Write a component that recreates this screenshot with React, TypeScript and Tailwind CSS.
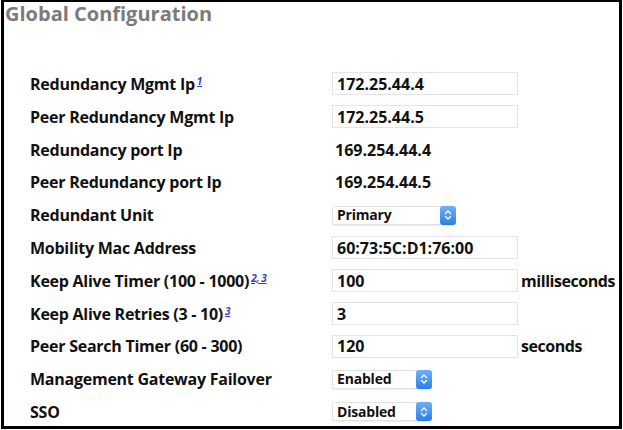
import React from 'react';

type Row = {
  label: string;
  sup?: string;
  kind: 'input' | 'text' | 'select';
  value: string;
  unit?: string;
  selectWidth?: string;
};

const ROWS: Row[] = [
  { label: 'Redundancy Mgmt Ip', sup: '1', kind: 'input', value: '172.25.44.4' },
  { label: 'Peer Redundancy Mgmt Ip', kind: 'input', value: '172.25.44.5' },
  { label: 'Redundancy port Ip', kind: 'text', value: '169.254.44.4' },
  { label: 'Peer Redundancy port Ip', kind: 'text', value: '169.254.44.5' },
  { label: 'Redundant Unit', kind: 'select', value: 'Primary', selectWidth: 'w-[124px]' },
  { label: 'Mobility Mac Address', kind: 'input', value: '60:73:5C:D1:76:00' },
  { label: 'Keep Alive Timer (100 - 1000)', sup: '2, 3', kind: 'input', value: '100', unit: 'milliseconds' },
  { label: 'Keep Alive Retries (3 - 10)', sup: '3', kind: 'input', value: '3' },
  { label: 'Peer Search Timer (60 - 300)', kind: 'input', value: '120', unit: 'seconds' },
  { label: 'Management Gateway Failover', kind: 'select', value: 'Enabled', selectWidth: 'w-[100px]' },
  { label: 'SSO', kind: 'select', value: 'Disabled', selectWidth: 'w-[100px]' },
];

function SelectBox({ value, width }: { value: string; width?: string }) {
  return (
    <div className={`flex items-center justify-between h-[19px] ${width} bg-white border border-[#e2e2e2] rounded-[3px] shadow-[0_1px_1px_rgba(0,0,0,0.08)]`}>
      <span className="pl-[4px] text-[14px] leading-none font-bold text-[#111] tracking-[-0.2px]">{value}</span>
      <span className="flex items-center justify-center w-[16px] h-[19px] -mr-px rounded-[3px] bg-gradient-to-b from-[#6fb0f7] to-[#2a7fe8]">
        <svg width="8" height="12" viewBox="0 0 8 12" fill="none" stroke="white" strokeWidth="1.4" strokeLinecap="round" strokeLinejoin="round">
          <path d="M1.5 4.5 L4 2 L6.5 4.5" />
          <path d="M1.5 7.5 L4 10 L6.5 7.5" />
        </svg>
      </span>
    </div>
  );
}

export default function App() {
  return (
    <div className="w-[623px] h-[430px] bg-white pl-px font-['Open_Sans',sans-serif]">
      <div className="w-[621px] h-[429px] border-[3px] border-t-[2px] border-black">
        <h2 className="pl-[1px] pt-[0px] h-[65.6px] text-[20px] leading-[24px] font-bold text-[#7b7b7b]">
          Global Configuration
        </h2>
        <div className="pl-[26px]">
          {ROWS.map((r) => (
            <div key={r.label} className="flex items-center h-[32.8px]">
              <div className="w-[302px] text-[16px] font-bold text-[#111] tracking-[-0.25px] whitespace-nowrap">
                {r.label}
                {r.sup && (
                  <sup className="ml-[2px] text-[10px] italic font-bold text-[#3a3acc] underline">{r.sup}</sup>
                )}
              </div>
              {r.kind === 'input' && (
                <div className="w-[186px] h-[23px] border border-[#e4e4e4] bg-white flex items-center pl-[4px] text-[16px] font-bold text-[#111]">
                  {r.value}
                </div>
              )}
              {r.kind === 'text' && (
                <div className="pl-[3px] text-[16px] font-bold text-[#111]">{r.value}</div>
              )}
              {r.kind === 'select' && <SelectBox value={r.value} width={r.selectWidth} />}
              {r.unit && (
                <span className="ml-[3px] text-[16px] font-bold text-[#111] tracking-[-0.45px]">{r.unit}</span>
              )}
            </div>
          ))}
        </div>
      </div>
    </div>
  );
}
